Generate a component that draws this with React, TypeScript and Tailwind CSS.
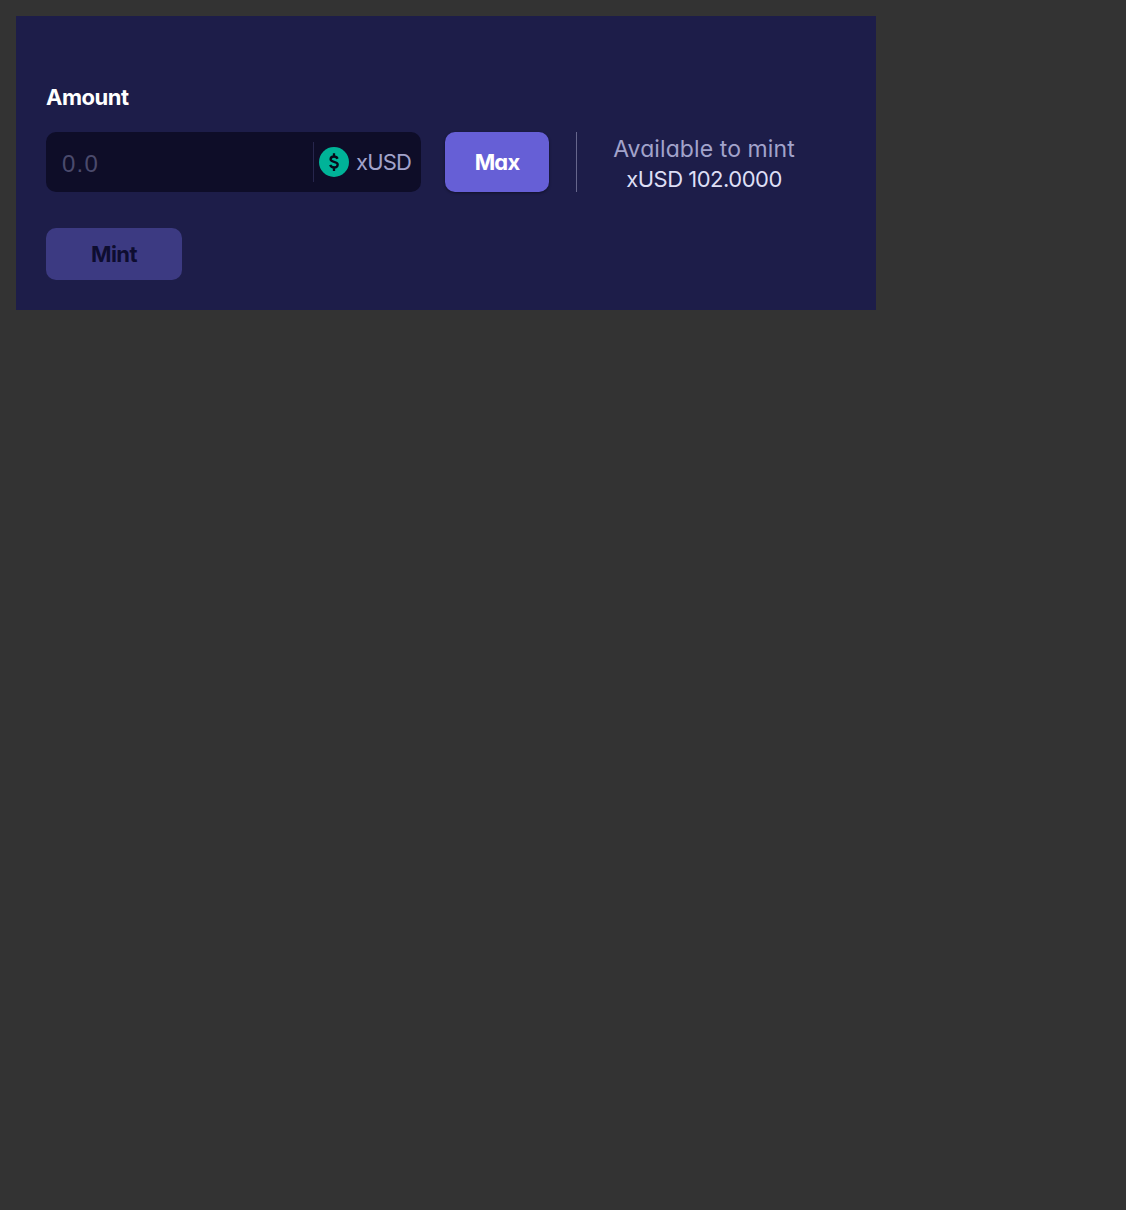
export default function App() {
  return (
    <div className="min-h-screen bg-[#333333] p-4 font-['Inter',sans-serif] [font-feature-settings:'cv11'_1]">
      <main className="h-[294px] w-[860px] bg-[#1d1d49] px-[30px] pt-[66px]">
        <label htmlFor="amount" className="block h-[30px] text-[22px] leading-[30px] font-bold tracking-[-0.5px] text-white">
          <span>Amount</span>
        </label>
        <div className="mt-5 flex h-[60px]">
          <div className="flex w-[375px] items-center rounded-[10px] bg-[#0e0d28] pr-[10px] pl-4">
            <input
              id="amount"
              placeholder="0.0"
              className="h-full w-[251px] bg-transparent pt-[3px] font-['Liberation_Sans',sans-serif] text-[24px] tracking-[1.2px] text-white outline-none placeholder:text-[#4a4a6c]"
            />
            <div className="flex h-10 items-center border-l border-[#27264d] pl-[5px]">
              <svg width="30" height="30" viewBox="0 0 30 30" fill="none">
                <circle cx="15" cy="15" r="15" fill="#00b398" />
                <path d="M15 6.2V9M15 20.5V24M18.6 11.7C18 10.4 16.8 9.5 15 9.5C13 9.5 11.6 10.6 11.6 12.2C11.6 15.7 18.7 13.8 18.7 17.5C18.7 19.3 17.2 20.5 15.1 20.5C13 20.5 11.7 19.4 11.2 17.9" stroke="#08091a" strokeWidth="2.3" />
              </svg>
              <span className="ml-[7px] text-[22px] leading-[30px] tracking-[-0.8px] text-[#a2a3cb]">xUSD</span>
            </div>
          </div>
          <button className="ml-6 w-[104px] rounded-[10px] bg-[#665fd6] text-[22px] font-bold tracking-[-0.8px] text-white shadow-[0_1px_3px_rgba(0,0,0,0.45)]">
            <span>Max</span>
          </button>
          <div className="ml-[27px] w-px bg-[#66668c]" />
          <div className="ml-[27px] w-[200px] pt-[2px] text-center text-[22px] leading-[30px]">
            <div className="text-[23px] tracking-[0.1px] text-[#a2a3cb]"><span>Available to mint</span></div>
            <div className="tracking-[-0.5px] text-[#dddff5]"><span>xUSD 102.0000</span></div>
          </div>
        </div>
        <button className="mt-9 h-[52px] w-[136px] rounded-[10px] bg-[#3c3a82] text-[22px] font-bold tracking-[-0.6px] text-[#0e0d30]">
          <span>Mint</span>
        </button>
      </main>
    </div>
  );
}
